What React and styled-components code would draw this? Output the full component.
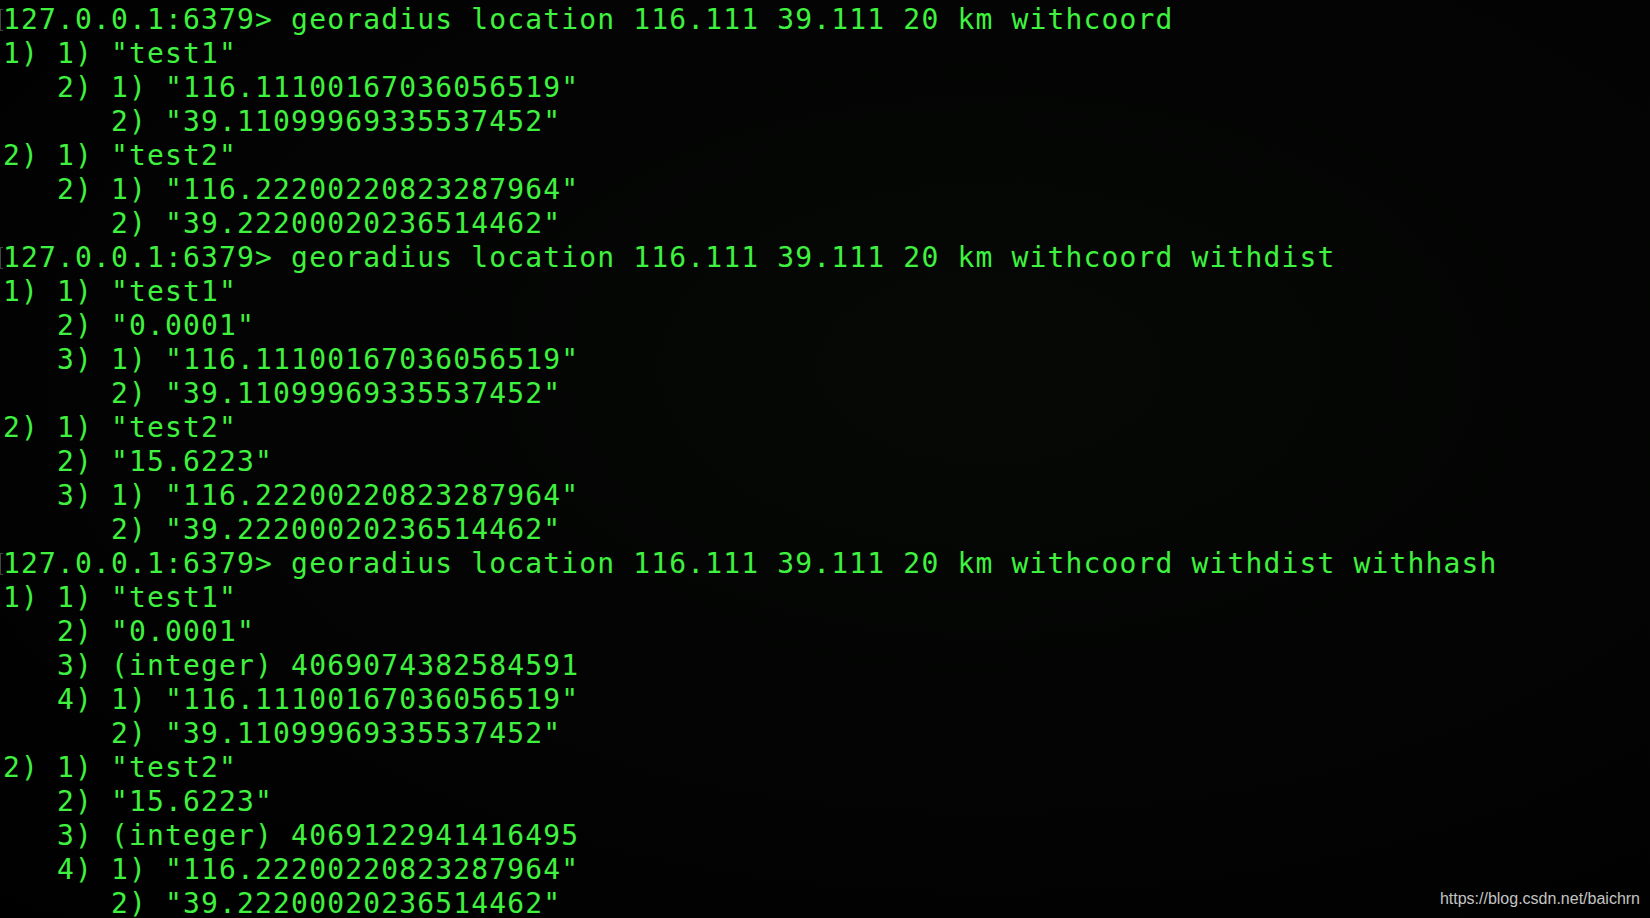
import React from "react";
import styled, { createGlobalStyle } from "styled-components";

const GlobalStyle = createGlobalStyle`
  html, body {
    margin: 0;
    padding: 0;
    background: #000;
  }
`;

const Terminal = styled.div`
  position: relative;
  width: 1650px;
  height: 918px;
  overflow: hidden;
  box-sizing: border-box;
  padding: 3px 0 0 3px;
  background: radial-gradient(ellipse at 60% 40%, #060806 0%, #020302 60%, #000 100%);
  font-family: "DejaVu Sans Mono", "Liberation Mono", monospace;
  font-size: 28px;
  letter-spacing: 1.15px;
  line-height: 34px;
  color: #3ff23f;
`;

const Line = styled.div`
  white-space: pre;
  position: relative;
  ${(p) =>
    p.$prompt &&
    `
    &::before {
      content: "";
      position: absolute;
      left: -3px;
      top: 6px;
      width: 3px;
      height: 22px;
      border: 1px solid #444;
      border-right: none;
      box-sizing: border-box;
    }
  `}
`;

const Watermark = styled.div`
  position: absolute;
  right: 10px;
  bottom: 10px;
  font-family: "Liberation Sans", Arial, sans-serif;
  font-size: 16px;
  letter-spacing: 0;
  line-height: 18px;
  color: #c4c4c4;
`;

const lines = [
  { text: "127.0.0.1:6379> georadius location 116.111 39.111 20 km withcoord", prompt: true },
  { text: '1) 1) "test1"' },
  { text: '   2) 1) "116.11100167036056519"' },
  { text: '      2) "39.11099969335537452"' },
  { text: '2) 1) "test2"' },
  { text: '   2) 1) "116.22200220823287964"' },
  { text: '      2) "39.22200020236514462"' },
  { text: "127.0.0.1:6379> georadius location 116.111 39.111 20 km withcoord withdist", prompt: true },
  { text: '1) 1) "test1"' },
  { text: '   2) "0.0001"' },
  { text: '   3) 1) "116.11100167036056519"' },
  { text: '      2) "39.11099969335537452"' },
  { text: '2) 1) "test2"' },
  { text: '   2) "15.6223"' },
  { text: '   3) 1) "116.22200220823287964"' },
  { text: '      2) "39.22200020236514462"' },
  { text: "127.0.0.1:6379> georadius location 116.111 39.111 20 km withcoord withdist withhash", prompt: true },
  { text: '1) 1) "test1"' },
  { text: '   2) "0.0001"' },
  { text: "   3) (integer) 4069074382584591" },
  { text: '   4) 1) "116.11100167036056519"' },
  { text: '      2) "39.11099969335537452"' },
  { text: '2) 1) "test2"' },
  { text: '   2) "15.6223"' },
  { text: "   3) (integer) 4069122941416495" },
  { text: '   4) 1) "116.22200220823287964"' },
  { text: '      2) "39.22200020236514462"' },
];

export default function App() {
  return (
    <>
      <GlobalStyle />
      <Terminal>
        {lines.map((l, i) => (
          <Line key={i} $prompt={l.prompt}>
            {l.text}
          </Line>
        ))}
        <Watermark>https://blog.csdn.net/baichrn</Watermark>
      </Terminal>
    </>
  );
}
